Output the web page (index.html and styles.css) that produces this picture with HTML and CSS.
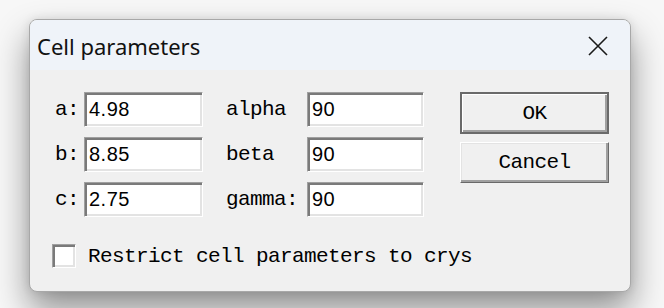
FILE: index.html
```html
<!DOCTYPE html>
<html>
<head>
<meta charset="utf-8">
<link rel="stylesheet" href="styles.css">
</head>
<body>
<div class="window">
  <div class="titlebar">
    <span class="title">Cell parameters</span>
    <svg class="close" width="20" height="20" viewBox="0 0 20 20"><path d="M1 1 L19 19 M19 1 L1 19" stroke="#1a1a1a" stroke-width="1.6" fill="none"/></svg>
  </div>
  <div class="content">
    <div class="main">
      <div class="fields">
        <span class="lbl">a:</span><div class="field">4.98</div>
        <span class="lbl lbl2">alpha</span><div class="field">90</div>
        <span class="lbl">b:</span><div class="field">8.85</div>
        <span class="lbl lbl2">beta</span><div class="field">90</div>
        <span class="lbl">c:</span><div class="field">2.75</div>
        <span class="lbl lbl2">gamma:</span><div class="field">90</div>
      </div>
      <div class="buttons">
        <div class="btn default"><span class="btn-inner">OK</span></div>
        <div class="btn"><span class="btn-inner">Cancel</span></div>
      </div>
    </div>
    <div class="check-row">
      <span class="checkbox"></span>
      <span class="lbl">Restrict cell parameters to crys</span>
    </div>
  </div>
</div>
</body>
</html>
```
FILE: styles.css
```css
html, body {
  margin: 0;
  padding: 0;
}
body {
  width: 664px;
  height: 308px;
  background: #f7f7f7;
  overflow: hidden;
}
.window {
  margin: 19px 0 0 29px;
  width: 600px;
  height: 271px;
  border: 1px solid #a8a8a8;
  border-radius: 8px;
  background: #f0f0f0;
  box-shadow: 0 18px 34px rgba(0,0,0,0.42), 0 0 10px rgba(0,0,0,0.1);
  overflow: hidden;
  display: flex;
  flex-direction: column;
}
.titlebar {
  height: 50px;
  background: #eff3f9;
  display: flex;
  align-items: center;
  justify-content: space-between;
  padding: 0 22px 0 7px;
  box-sizing: border-box;
}
.title {
  font-family: "Noto Sans", sans-serif;
  font-size: 22px;
  color: #111;
  margin-top: 1px;
}
.close {
  display: block;
  margin-top: 1px;
}
.content {
  padding: 22px 0 0 25px;
}
.main {
  display: flex;
}
.fields {
  display: grid;
  grid-template-columns: 29px 119px 104px 117px;
  grid-auto-rows: 35px;
  row-gap: 10px;
  align-items: center;
}
.lbl {
  font-family: "Liberation Mono", monospace;
  font-size: 21px;
  letter-spacing: -0.6px;
  color: #000;
  white-space: pre;
}
.lbl2 {
  padding-left: 23px;
}
.field {
  height: 35px;
  box-sizing: border-box;
  background: #fff;
  border-top: 1px solid #a0a0a0;
  border-left: 1px solid #a0a0a0;
  border-bottom: 1px solid #fff;
  border-right: 1px solid #fff;
  box-shadow: inset 2px 2px 0 #7a7a7a, inset -2px -2px 0 #e3e3e3;
  font-family: "Liberation Sans", sans-serif;
  font-size: 20px;
  letter-spacing: 0.5px;
  line-height: 33px;
  padding-left: 4px;
  color: #000;
}
.buttons {
  margin-left: 36px;
  display: flex;
  flex-direction: column;
  gap: 8px;
}
.btn {
  width: 149px;
  height: 41px;
  box-sizing: border-box;
  background: #f0f0f0;
  border-top: 1px solid #fff;
  border-left: 1px solid #fff;
  border-right: 1px solid #696969;
  border-bottom: 1px solid #696969;
  box-shadow: inset -2px -2px 0 #a0a0a0, inset 1px 1px 0 #e3e3e3;
  display: flex;
  align-items: center;
  justify-content: center;
}
.btn.default {
  height: 42px;
  border: 2px solid #6a6a6a;
  box-shadow: inset 1px 1px 0 #fff, inset -2px -2px 0 #a0a0a0;
}
.btn-inner {
  font-family: "Liberation Mono", monospace;
  font-size: 21px;
  letter-spacing: -0.6px;
  color: #000;
}
.check-row {
  display: flex;
  align-items: center;
  margin-top: 27px;
  margin-left: -3px;
}
.checkbox {
  width: 24px;
  height: 24px;
  box-sizing: border-box;
  background: #fff;
  border-top: 1px solid #a0a0a0;
  border-left: 1px solid #a0a0a0;
  border-bottom: 1px solid #fff;
  border-right: 1px solid #fff;
  box-shadow: inset 2px 2px 0 #7a7a7a, inset -2px -2px 0 #e3e3e3;
  margin-right: 12px;
}
```
